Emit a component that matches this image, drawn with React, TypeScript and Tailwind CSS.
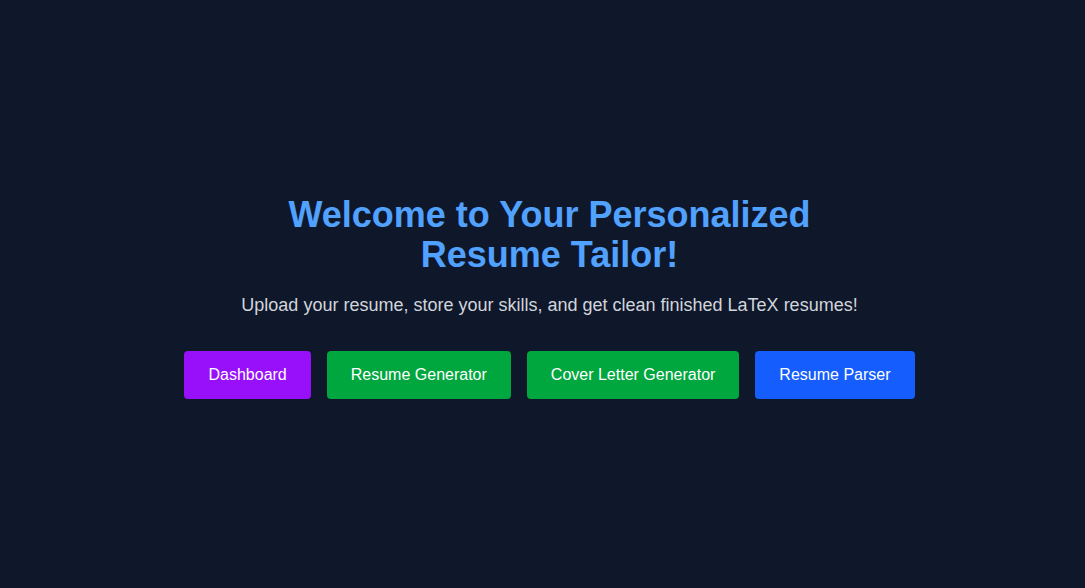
import React from 'react';

const links = [
  { label: 'Dashboard', className: 'bg-purple-600 hover:bg-purple-700' },
  { label: 'Resume Generator', className: 'bg-green-600 hover:bg-green-700' },
  { label: 'Cover Letter Generator', className: 'bg-green-600 hover:bg-green-700' },
  { label: 'Resume Parser', className: 'bg-blue-600 hover:bg-blue-700' },
];

const App: React.FC = () => {
  return (
    <div className="min-h-screen bg-slate-900 flex items-center justify-center pl-[14px] font-['Liberation_Sans',Arial,sans-serif]">
      <div className="text-center pt-[5px]">
        <h1 className="text-4xl font-bold text-blue-400 max-w-xl mx-auto mb-4">
          Welcome to Your Personalized Resume Tailor!
        </h1>
        <p className="text-lg text-gray-300 mb-8">
          Upload your resume, store your skills, and get clean finished LaTeX resumes!
        </p>
        <div className="flex justify-center gap-4">
          {links.map(link => (
            <button
              key={link.label}
              className={`px-6 py-3 rounded text-base text-white transition-colors ${link.className}`}
            >
              {link.label}
            </button>
          ))}
        </div>
      </div>
    </div>
  );
};

export default App;
